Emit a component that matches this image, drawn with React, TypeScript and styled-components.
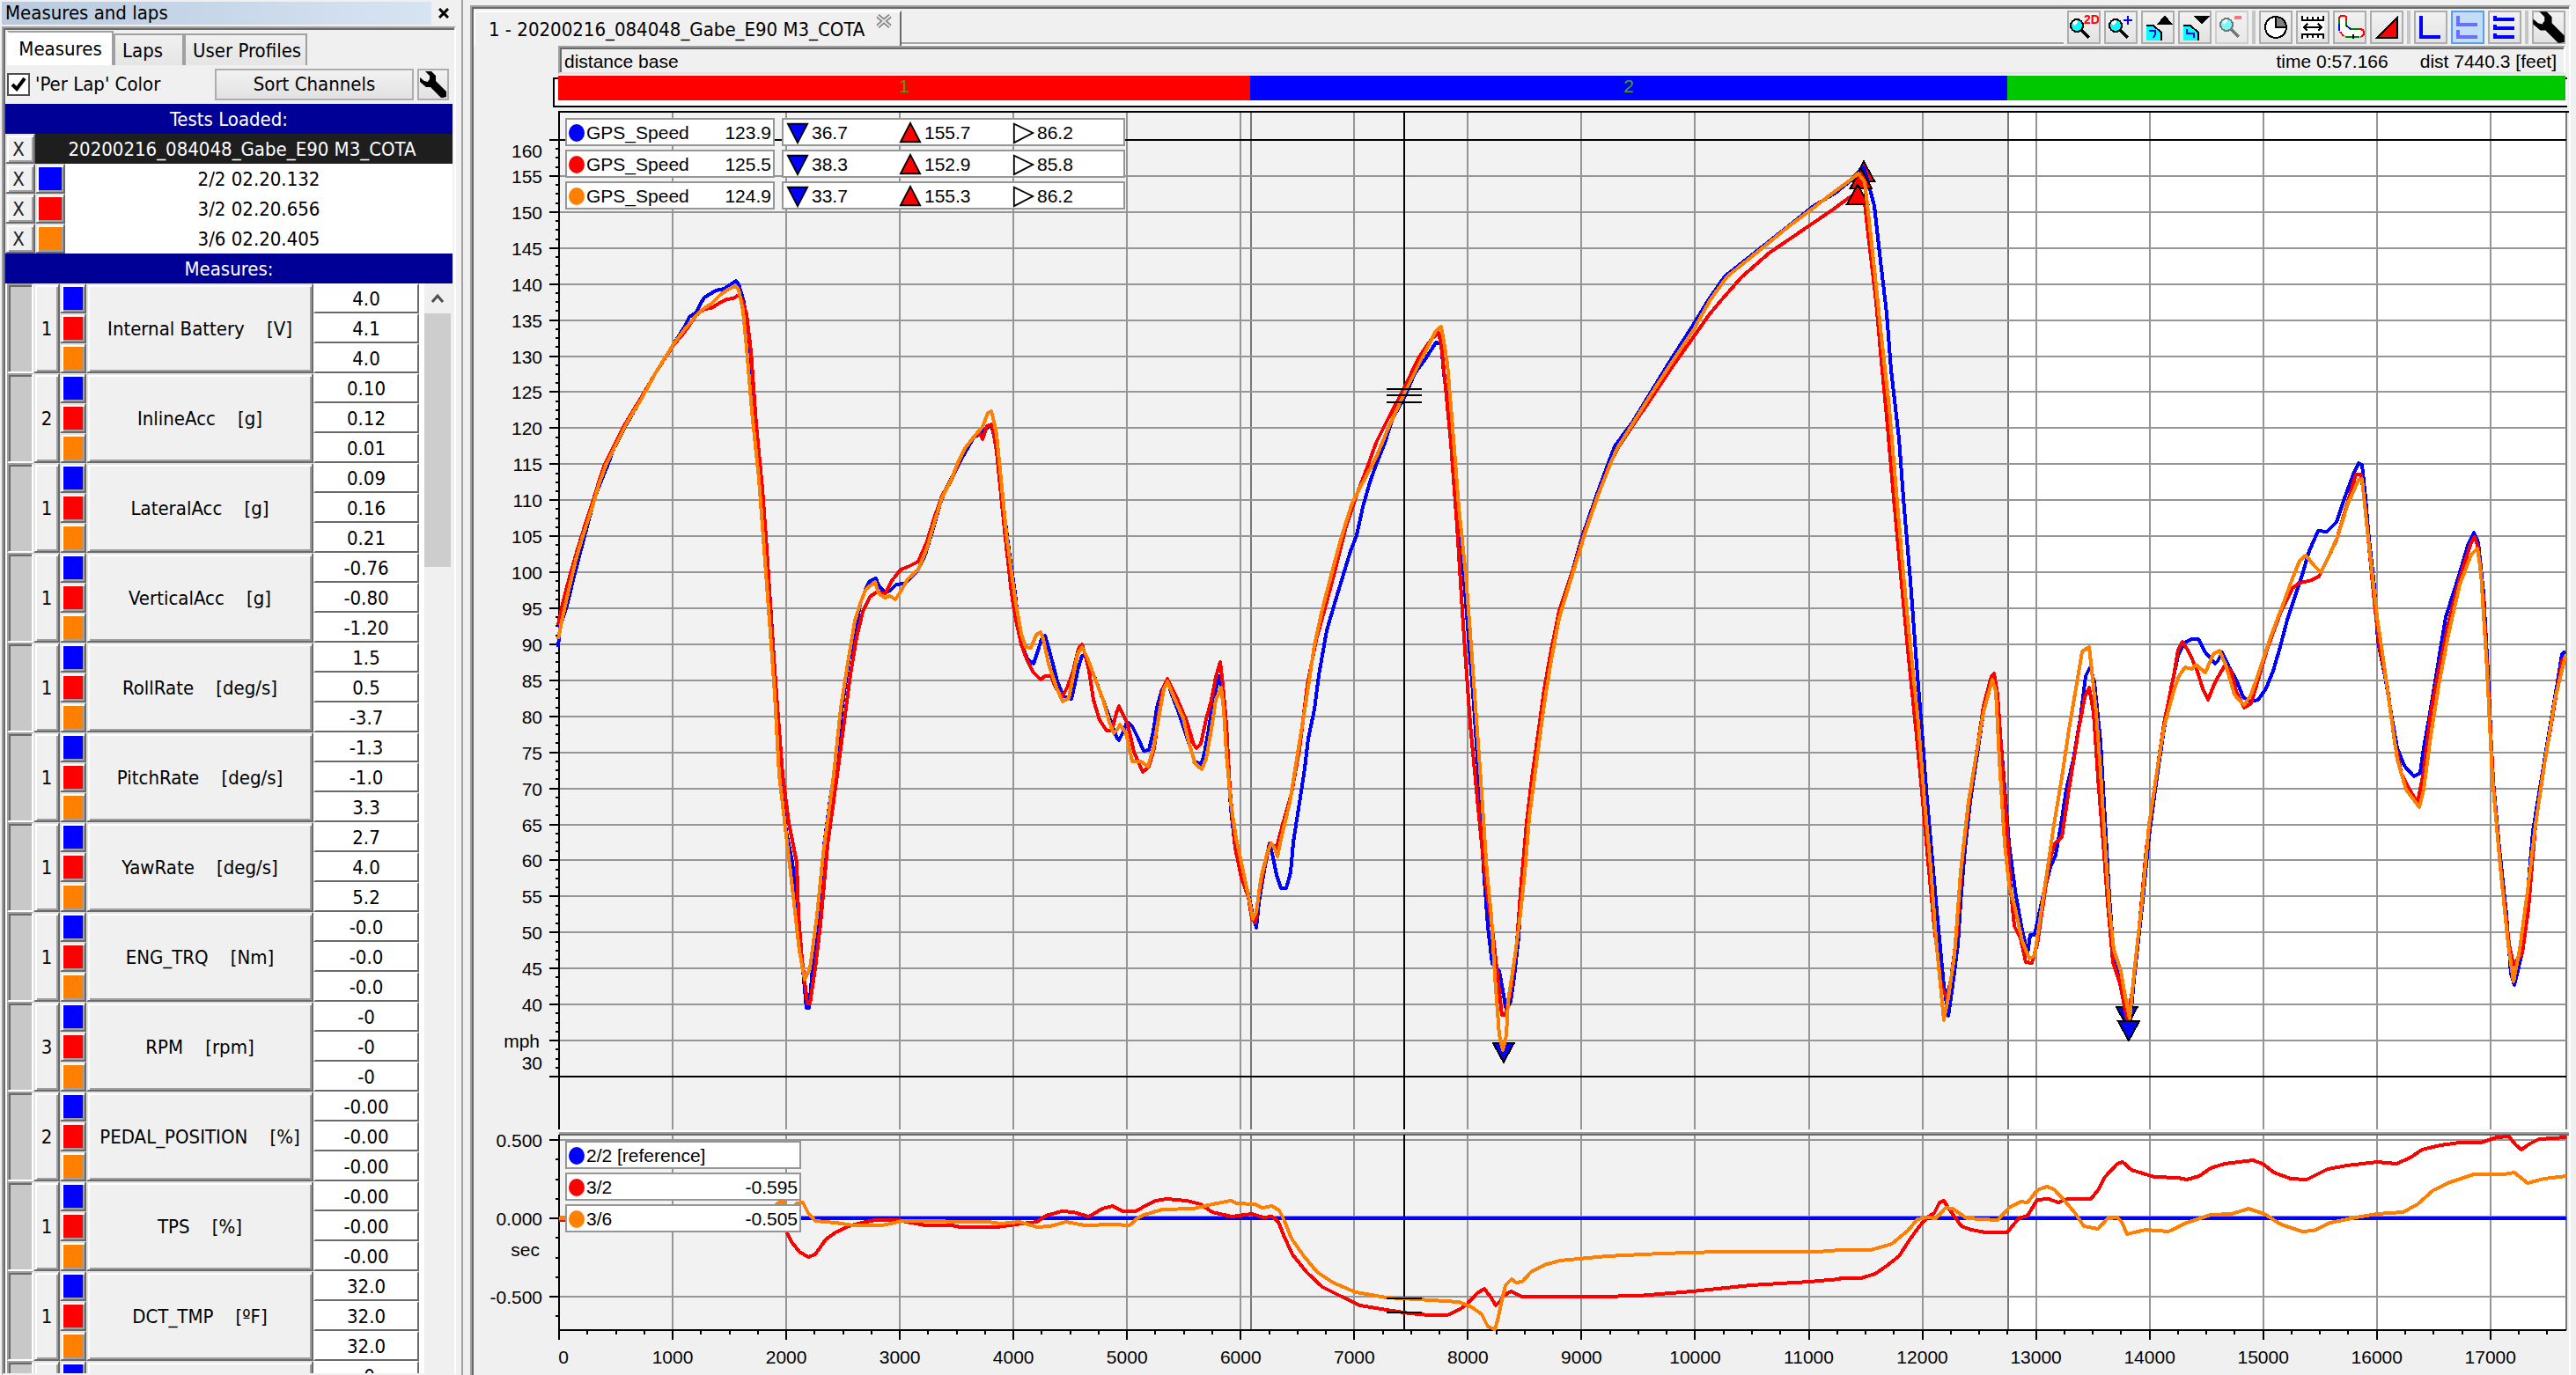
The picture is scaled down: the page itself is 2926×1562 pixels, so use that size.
import React, { useLayoutEffect, useRef, useState } from "react";
import styled, { createGlobalStyle, css } from "styled-components";

/* ---------- theme ---------- */

const BLUE = "#0000ff";
const RED = "#ff0000";
const ORANGE = "#ff8000";
const FACE = "#f0f0f0";
const LIGHT = "#e3e3e3";
const SHADOW = "#a0a0a0";
const DARK = "#696969";
const NAVY = "#000096";
const GRID = "#969696";
const UI_FONT = '"DejaVu Sans Condensed", "DejaVu Sans", sans-serif';
const PLOT_FONT = '"Liberation Sans", Arial, sans-serif';

const GlobalStyle = createGlobalStyle`
  * { box-sizing: border-box; }
  html, body { margin: 0; height: 100%; overflow: hidden; background: ${FACE}; }
  #root { height: 100%; }
  button, input { font: inherit; color: inherit; margin: 0; }
`;

const raised = css`
  border: 2px solid;
  border-color: ${LIGHT} ${DARK} ${DARK} ${LIGHT};
  box-shadow: inset 2px 2px #fff, inset -2px -2px ${SHADOW};
  background: ${FACE};
`;

/* ---------- telemetry ---------- */

type Block = { d0: number; dk: number; v0: number; vk: number; raw: string };
type Point = [number, number];

const decode = (blocks: Block[]): Point[] =>
  blocks.flatMap(({ d0, dk, v0, vk, raw }) =>
    raw.trim().split(/\s+/).map((pair): Point => {
      const [d, v] = pair.split(",").map(Number);
      return [d0 + d * dk, v0 + v * vk];
    })
  );

const sA = { d0: -271.2, dk: 3.7558, v0: 145.217, vk: -0.046751 };
const sB = { d0: 5463, dk: 3.7558, v0: 137.886, vk: -0.068568 };
const sC = { d0: 11042.2, dk: 4.2797, v0: 159.878, vk: -0.082594 };
const sW = { d0: -4920.6, dk: 7.7489, v0: 179.426, vk: -0.122175 };
const tA = { d0: -891.1, dk: 3.9535, v0: 1.5955, vk: -0.0018727 };
const tB = { d0: 5153, dk: 3.9535, v0: 0.69663, vk: -0.0018727 };
const tC = { d0: 11274.7, dk: 4.1314, v0: 0.69663, vk: -0.0018727 };

const speedBlue = decode([
  { ...sA, raw: "70,1190 75,1130 90,1065 105,990 122,910 140,820 155,750 172,695 185,650 200,600 230,530 265,455 300,375 340,290 365,240 378,208 395,195 403,172 412,152 440,130 460,125 475,112 487,102 494,112 505,165 513,240 521,350 535,540 548,720 560,900 572,1140 580,1300 592,1568" },
  { ...sW, raw: "893,945 900,980 906,1030 911,1090 916,1145 919,1145 923,1100 928,1060 936,960 944,900" },
  { ...sA, raw: "722,1568 735,1380 750,1230 768,1140 778,1060 790,1020 798,995 808,988 815,985 822,1005 835,1028 848,1022 862,1003 880,1000 895,985 915,960 930,915 945,855 968,755 985,705 1005,658 1020,622 1045,568 1060,555 1072,540 1086,530 1095,580 1105,690 1117,800 1128,920 1140,1030 1150,1120 1158,1180 1170,1225 1185,1240 1195,1200 1203,1165 1212,1155 1222,1200 1240,1290 1255,1335 1272,1343 1280,1310 1290,1250 1297,1215 1303,1215 1318,1250 1335,1305 1350,1355 1365,1410 1378,1455 1385,1465 1395,1440 1402,1410 1415,1425 1430,1460 1442,1497 1455,1495 1465,1440 1473,1370 1485,1315 1497,1288 1508,1330 1525,1385 1540,1440 1550,1480 1562,1530" },
  { ...sB, raw: "41,938 50,943 58,920 68,870 78,810 93,762 103,820 112,930 120,1030 130,1110 145,1165 160,1205 172,1245 179,1272 186,1220 200,1145 210,1102 218,1130 228,1165 238,1192 250,1192 260,1160 266,1100 280,1020 293,950 302,890 315,830 327,760 345,670 365,610 385,550 400,510 415,478 430,420 445,370 460,335 480,290 500,240 526,200 550,150 575,122 600,88 612,90 620,150 632,230 645,370 660,500 675,660 690,820 702,980 712,1150 722,1270 733,1345 748,1360 760,1410 766,1440 775,1420 785,1370 795,1290 805,1150 815,1070 825,985 840,900 855,800 870,720 890,640 920,550 945,475 975,400 1000,340 1020,298 1060,250 1100,195 1150,125 1200,55 1240,0" },
  { ...sW, raw: "1959,314 1997,284 2030,258" },
  { ...sC, raw: "0,110 45,88 75,68 95,50 103,45 115,75 125,110 135,190 150,290 160,385 175,500 185,600 200,740 212,880 222,990 232,1090 245,1210 255,1310 268,1420 277,1470 285,1430 297,1350 302,1280 312,1190 322,1110 335,1040 350,960 362,915 372,895 380,960 390,1050 402,1180 415,1260 428,1320 440,1365 445,1335 455,1335 463,1300 475,1260 487,1220 498,1200 508,1150 520,1090 535,1040 548,970 560,900 568,885 577,910 590,1010 600,1140 608,1270 618,1370 630,1400 642,1460 650,1490 660,1410 675,1290 690,1170 705,1080 720,990 735,920 750,865 762,843 778,838 792,838 805,860 825,878 832,875 840,860 855,885 870,905 883,935 900,942 915,940 930,920 945,890 960,850 975,805 990,765 1005,730 1020,690 1038,655 1055,657 1075,640 1092,600 1110,560 1120,542 1128,545 1135,600 1143,670 1153,750 1160,840 1175,900 1190,970 1200,1020 1215,1050 1235,1068 1248,1062 1255,1020 1265,970 1280,900 1300,800 1325,735 1345,680 1358,658 1367,675 1378,760 1388,920 1397,1060 1410,1190 1425,1300 1435,1400 1442,1418 1455,1370 1465,1300 1480,1160 1500,1060 1515,980 1530,910 1540,862 1547,858" },
]);

const speedRed = decode([
  { ...sA, raw: "70,1125 80,1060 97,980 115,900 132,830 150,760 165,700 180,645 198,598 230,522 265,450 300,375 340,292 365,255 395,205 412,186 430,184 445,170 465,158 480,155 493,143 502,160 511,200 521,310 535,530 548,720 560,900 572,1150 582,1330 597,1568" },
  { ...sW, raw: "896,935 905,980 907,1040 911,1090 917,1140 920,1140 926,1100 932,1050 940,960" },
  { ...sA, raw: "725,1568 742,1390 755,1270 770,1160 785,1085 800,1040 815,1028 838,1030 850,995 872,960 890,950 915,935 935,875 950,815 970,740 990,698 1008,640 1022,605 1048,560 1058,555 1065,572 1075,533 1088,527 1097,610 1107,740 1120,890 1132,1030 1143,1110 1155,1180 1170,1230 1185,1265 1200,1285 1212,1275 1225,1275 1235,1310 1252,1335 1265,1305 1278,1260 1290,1195 1297,1182 1305,1215 1315,1260 1325,1345 1340,1405 1355,1438 1367,1438 1378,1385 1385,1365 1393,1385 1405,1420 1420,1500 1440,1560 1455,1545 1466,1490 1478,1390 1488,1310 1498,1282 1508,1310 1525,1355 1545,1420 1560,1480" },
  { ...sB, raw: "12,845 25,890 40,908 50,900 62,850 75,810 84,765 95,735 101,780 110,860 118,990 130,1110 145,1170 160,1210 170,1255 177,1262 183,1215 200,1140 213,1102 228,1110 240,1070 262,1000 280,910 300,780 320,690 340,625 365,545 390,460 415,395 440,340 460,290 490,240 526,180 560,120 590,80 606,68 613,90 622,160 635,290 650,460 665,660 680,860 697,1010 710,1120 720,1200 735,1290 745,1370 755,1448 764,1448 775,1400 790,1300 800,1180 812,1060 825,970 840,880 855,790 870,710 890,630 925,540 950,470 980,395 1010,328 1030,298 1070,245 1110,195 1160,130 1200,80 1240,32 1270,0" },
  { ...sW, raw: "1978,315 2010,287" },
  { ...sC, raw: "0,137 40,115 75,95 95,90 103,92 115,170 128,270 140,370 152,480 165,600 180,730 195,870 212,1000 225,1110 235,1210 248,1320 262,1420 273,1440 282,1410 295,1330 305,1220 318,1120 335,1030 350,950 365,900 372,895 378,930 388,1040 398,1160 405,1260 412,1320 425,1340 437,1380 450,1382 460,1350 470,1290 485,1210 497,1180 510,1170 525,1090 545,990 558,935 567,918 575,960 585,1070 595,1180 605,1280 615,1380 630,1415 645,1475 655,1430 670,1320 685,1190 700,1090 720,980 740,900 750,855 758,842 772,858 788,888 800,920 812,940 825,910 845,882 858,890 870,925 885,952 900,945 915,905 935,850 960,795 985,752 1000,743 1020,740 1040,732 1055,705 1075,670 1095,615 1115,560 1127,560 1135,620 1145,700 1155,790 1165,850 1180,920 1195,1010 1210,1065 1225,1090 1243,1112 1255,1060 1270,960 1285,890 1305,810 1330,735 1352,675 1360,665 1368,685 1378,770 1388,940 1400,1100 1415,1230 1430,1350 1440,1385 1458,1365 1470,1290 1485,1150 1500,1065 1520,970 1540,875 1547,865" },
]);

const speedOrange = decode([
  { ...sA, raw: "70,1165 80,1100 95,1020 112,930 128,860 150,770 168,700 182,650 200,600 230,527 265,455 300,375 340,290 365,248 395,205 412,183 430,170 450,145 470,125 487,117 494,128 503,190 512,300 525,490 540,690 553,900 565,1110 578,1330 588,1568" },
  { ...sW, raw: "892,940 899,1000 908,1080 914,1113 920,1100 928,1040 935,970" },
  { ...sA, raw: "715,1568 732,1370 750,1220 765,1110 778,1060 790,1018 803,1005 813,995 822,1030 835,1042 848,1038 860,1048 872,1025 890,988 915,958 935,895 950,830 970,745 990,695 1008,635 1025,595 1048,558 1065,535 1076,495 1086,490 1092,520 1098,560 1107,690 1120,850 1133,970 1143,1060 1155,1150 1165,1190 1178,1192 1190,1152 1200,1145 1208,1165 1220,1240 1237,1310 1252,1352 1266,1340 1278,1275 1288,1210 1298,1188 1310,1220 1325,1270 1348,1345 1362,1410 1372,1445 1380,1435 1386,1418 1400,1445 1415,1530 1435,1530 1452,1545 1465,1490 1478,1400 1490,1315 1498,1290 1512,1335 1535,1400 1550,1480 1562,1530" },
  { ...sB, raw: "34,938 52,952 62,930 75,870 85,810 96,785 103,830 110,920 120,1020 132,1090 150,1165 163,1215 172,1255 180,1240 190,1175 205,1122 214,1102 222,1112 230,1128 240,1085 258,1020 275,930 295,820 315,700 335,628 360,545 380,480 405,412 430,370 460,320 490,260 526,190 570,115 600,65 612,55 620,85 628,130 640,260 655,420 670,560 683,700 695,850 708,1000 720,1160 730,1250 738,1370 748,1490 757,1520 765,1490 770,1420 785,1340 797,1260 808,1160 820,1050 835,940 855,820 870,730 890,645 925,545 950,475 980,398 1010,330 1025,302 1065,248 1105,190 1155,125 1205,60 1245,0" },
  { ...sW, raw: "1962,314 1999,284 2032,257" },
  { ...sC, raw: "0,112 40,88 75,66 93,55 105,70 113,120 127,230 140,330 155,450 170,590 185,730 200,850 215,980 228,1110 240,1220 252,1340 268,1478 278,1440 290,1370 302,1230 318,1110 335,1030 350,960 368,905 375,925 383,1040 393,1180 402,1250 415,1290 430,1345 443,1375 455,1370 468,1300 483,1210 495,1150 510,1070 525,990 540,920 552,858 567,850 573,890 582,960 590,1060 600,1180 608,1290 618,1360 632,1395 640,1430 650,1475 660,1400 675,1280 690,1150 705,1070 720,985 740,925 752,900 765,885 778,887 785,880 805,893 822,862 835,857 848,880 865,930 885,948 900,930 918,888 940,835 965,780 985,735 1000,705 1013,697 1030,715 1043,725 1055,705 1078,665 1100,610 1120,570 1128,568 1138,640 1148,720 1158,800 1170,860 1185,945 1200,1040 1218,1090 1245,1120 1255,1090 1270,1000 1285,915 1305,830 1330,745 1352,695 1365,685 1372,725 1385,890 1397,1070 1412,1220 1428,1350 1440,1412 1452,1360 1468,1260 1485,1150 1505,1040 1525,940 1547,865" },
]);

const deltaRed = decode([
  { ...tA, raw: "226,858 700,858 730,890 745,935 760,965 780,985 795,975 820,925 840,900 870,880 900,868 930,858 980,858 1010,868 1040,876 1100,877 1120,882 1200,882 1240,873 1290,865 1310,842 1345,828 1370,830 1405,847 1435,820 1458,810 1480,828 1510,828 1540,802" },
  { ...tB, raw: "0,330 25,312 50,305 95,312 125,325 150,350 195,366 240,358 265,370 285,366 297,385 310,430 330,495 360,555 395,605 440,640 480,668 540,685 590,695 635,702 675,702 700,685 718,665 740,628 757,612 770,640 782,668 792,655 800,635 815,622 840,640 1010,640 1100,635 1220,620 1350,600 1480,587 1548,578" },
  { ...tC, raw: "0,576 45,575 75,560 100,535 125,500 150,440 170,395 185,370 200,355 212,318 222,312 235,345 258,400 280,412 310,420 357,420 380,372 400,362 420,310 445,305 465,318 485,305 535,305 550,275 565,230 590,185 602,180 620,208 670,232 720,235 740,240 765,228 790,200 820,186 880,175 900,185 925,215 960,238 995,240 1040,205 1080,192 1145,180 1185,186 1215,165 1240,138 1280,122 1320,115 1365,113 1400,95 1425,93 1438,120 1452,138 1470,118 1490,102 1547,95" },
]);

const deltaOrange = decode([
  { ...tA, raw: "226,853 690,850 712,800 725,795 740,830 755,800 768,798 780,835 795,862 840,868 880,875 945,875 990,862 1180,864 1210,870 1250,865 1290,882 1320,880 1355,863 1395,875 1460,872 1495,875 1515,850" },
  { ...tB, raw: "0,360 40,342 110,340 150,325 192,312 205,322 245,324 262,335 285,330 300,345 312,380 328,440 355,500 385,555 420,590 470,625 540,642 640,650 700,658 730,675 750,700 765,740 780,750 787,720 795,650 803,600 818,580 828,590 840,587 860,555 890,530 925,516 1030,502 1150,492 1280,486 1500,486 1548,480" },
  { ...tC, raw: "0,480 65,480 110,458 145,415 165,375 185,368 205,372 225,335 240,340 270,372 335,378 360,335 385,315 400,318 420,275 440,265 455,272 480,315 500,355 520,400 550,408 570,372 590,368 600,385 612,425 650,412 700,418 740,388 790,360 835,358 870,340 905,358 940,392 985,418 1010,415 1045,388 1100,370 1145,358 1200,352 1230,325 1265,275 1300,248 1350,222 1415,222 1437,215 1465,252 1500,238 1547,228" },
]);

const DIST_MAX = 17668;
const SPLITS = [6091, 12755];
const CURSOR = 7440.3;
const GUTTER = 97;

const MEASURES: { n: string; name: string; unit: string; v: string[] }[] = [
  { n: "1", name: "Internal Battery", unit: "[V]", v: ["4.0", "4.1", "4.0"] },
  { n: "2", name: "InlineAcc", unit: "[g]", v: ["0.10", "0.12", "0.01"] },
  { n: "1", name: "LateralAcc", unit: "[g]", v: ["0.09", "0.16", "0.21"] },
  { n: "1", name: "VerticalAcc", unit: "[g]", v: ["-0.76", "-0.80", "-1.20"] },
  { n: "1", name: "RollRate", unit: "[deg/s]", v: ["1.5", "0.5", "-3.7"] },
  { n: "1", name: "PitchRate", unit: "[deg/s]", v: ["-1.3", "-1.0", "3.3"] },
  { n: "1", name: "YawRate", unit: "[deg/s]", v: ["2.7", "4.0", "5.2"] },
  { n: "1", name: "ENG_TRQ", unit: "[Nm]", v: ["-0.0", "-0.0", "-0.0"] },
  { n: "3", name: "RPM", unit: "[rpm]", v: ["-0", "-0", "-0"] },
  { n: "2", name: "PEDAL_POSITION", unit: "[%]", v: ["-0.00", "-0.00", "-0.00"] },
  { n: "1", name: "TPS", unit: "[%]", v: ["-0.00", "-0.00", "-0.00"] },
  { n: "1", name: "DCT_TMP", unit: "[ºF]", v: ["32.0", "32.0", "32.0"] },
  { n: "", name: "", unit: "", v: ["-0", "", ""] },
];
const LAP_COLORS = [BLUE, RED, ORANGE];

/* ---------- shell ---------- */

const Shell = styled.div`
  display: flex;
  height: 100vh;
  overflow: hidden;
  background: ${FACE};
  font: 22px/26px ${UI_FONT};
  color: #000;
`;

const Sidebar = styled.aside`
  flex: none;
  width: 526px;
  display: flex;
  flex-direction: column;
  padding: 2px 6px 0 2px;
  border-right: 2px solid ${SHADOW};
`;

const TitleBar = styled.header`
  flex: none;
  display: flex;
  align-items: center;
  height: 28px;
  padding-bottom: 2px;
`;
const Title = styled.h1`
  flex: 1;
  margin: 0;
  padding-left: 4px;
  font: inherit;
  background: linear-gradient(90deg, #b9cade, #d7e4f2);
`;
const CloseButton = styled.button`
  width: 28px;
  height: 26px;
  padding: 7px 8px;
  border: 0;
  background: none;
  svg { display: block; width: 12px; height: 12px; }
`;

const SidePanel = styled.div`
  flex: 1;
  min-height: 0;
  display: flex;
  flex-direction: column;
  border: 2px solid;
  border-color: ${SHADOW} #fff transparent ${SHADOW};
  box-shadow: inset 2px 2px ${DARK};
  padding: 2px 2px 0 2px;
`;

const TabRow = styled.nav`
  flex: none;
  display: flex;
  align-items: flex-end;
  height: 40px;
  padding-left: 2px;
`;
const SideTab = styled.button<{ $on?: boolean; $w: number }>`
  width: ${(p) => p.$w}px;
  height: ${(p) => (p.$on ? 39 : 36)}px;
  padding: ${(p) => (p.$on ? 0 : 2)}px 8px 0;
  border: 2px solid ${SHADOW};
  border-bottom: 0;
  ${(p) => p.$on && "border-left-color: #fff;"}
  background: ${(p) => (p.$on ? "#fff" : "linear-gradient(#f0f0f0, #e5e5e5)")};
  text-align: ${(p) => (p.$on ? "center" : "left")};
  white-space: nowrap;
`;

const OptionsRow = styled.div`
  flex: none;
  display: flex;
  align-items: center;
  gap: 4px;
  height: 44px;
  padding: 0 4px 0 2px;
`;
const CheckLabel = styled.label`
  flex: 1;
  display: flex;
  align-items: center;
  gap: 6px;
  white-space: nowrap;
`;
const Check = styled.input`
  appearance: none;
  width: 26px;
  height: 26px;
  border: 2px solid #505050;
  background: #fff;
  &:checked {
    background: #fff url("data:image/svg+xml,%3Csvg xmlns='http://www.w3.org/2000/svg' viewBox='0 0 22 22'%3E%3Cpath d='M4 11l5 5L18 4' fill='none' stroke='%23000' stroke-width='4'/%3E%3C/svg%3E");
  }
`;
const GrayButton = styled.button<{ $w: number }>`
  width: ${(p) => p.$w}px;
  height: 36px;
  padding: 0;
  border: 2px solid #adadad;
  background: linear-gradient(#f2f2f2, #e2e2e2);
  svg { display: block; width: 32px; height: 32px; }
`;

const SectionHead = styled.h2`
  flex: none;
  margin: 0;
  height: 34px;
  font: inherit;
  line-height: 36px;
  text-align: center;
  color: #fff;
  background: ${NAVY};
`;

const TestRow = styled.div<{ $dark?: boolean }>`
  flex: none;
  display: flex;
  height: 34px;
  color: ${(p) => (p.$dark ? "#fff" : "#000")};
  background: ${(p) => (p.$dark ? "#1e1e1e" : "#fff")};
`;
const RemoveButton = styled.button`
  ${raised}
  width: 34px;
  padding: 2px 4px 0 0;
  color: #222;
`;
const LapSwatch = styled.button<{ $c: string }>`
  ${raised}
  width: 34px;
  padding: 2px;
  background: ${(p) => p.$c};
`;
const TestName = styled.span<{ $inset?: boolean }>`
  flex: 1;
  padding-right: ${(p) => (p.$inset ? 4 : 0)}px;
  line-height: 36px;
  text-align: center;
  white-space: nowrap;
`;

const ListArea = styled.div`
  flex: 1;
  min-height: 0;
  display: flex;
  overflow: hidden;
  background: #fff;
`;
const MeasureTable = styled.table`
  flex: none;
  align-self: flex-start;
  width: 470px;
  table-layout: fixed;
  border-collapse: separate;
  border-spacing: 0;
  border-left: 2px solid #fff;
  margin-right: 6px;
  td { padding: 2px 0 0; height: 34px; line-height: 26px; text-align: center; white-space: pre; overflow: hidden; }
`;
const Lane = styled.td`
  border: 2px solid;
  border-color: ${SHADOW} #fff #fff ${SHADOW};
  box-shadow: inset 2px 2px ${DARK};
  background: #c8c8c8;
`;
const Raised = styled.td`${raised}`;
const ColorCell = styled.td<{ $c: string }>`
  ${raised}
  background: ${(p) => p.$c};
`;
const ValueCell = styled.td`
  border: 2px solid;
  border-color: #fff ${DARK} ${DARK} #fff;
  background: #fff;
`;
const ScrollBar = styled.div`
  flex: 1;
  background: ${FACE};
`;
const ScrollArrow = styled.button`
  display: flex;
  align-items: center;
  justify-content: center;
  width: 30px;
  height: 34px;
  padding: 0;
  border: 0;
  background: none;
`;
const ScrollThumb = styled.div`
  width: 30px;
  height: 288px;
  background: #cdcdcd;
`;

/* ---------- chart frame ---------- */

const Main = styled.main`
  flex: 1;
  min-width: 0;
  display: flex;
  flex-direction: column;
  margin: 6px 6px 0 8px;
  border: 2px solid;
  border-color: ${SHADOW} #fff transparent ${SHADOW};
  border-bottom: 0;
  box-shadow: inset 2px 2px ${DARK};
  padding: 2px 0 0 2px;
`;
const Strip = styled.div`
  flex: none;
  display: flex;
  height: 42px;
  padding-top: 2px;
`;
const DocTab = styled.div`
  display: flex;
  width: 486px;
  padding: 0 6px 0 15px;
  border: 2px solid;
  border-color: #fff ${DARK} transparent #fff;
  border-bottom: 0;
  white-space: nowrap;
`;
const DocName = styled.span`
  flex: 1;
  line-height: 40px;
`;
const DocClose = styled.button`
  width: 24px;
  height: 20px;
  padding: 2px;
  border: 0;
  background: none;
  svg { display: block; width: 20px; height: 16px; }
`;
const StripLine = styled.div`
  flex: 1;
  border-bottom: 2px solid #fff;
  box-shadow: inset 0 -2px ${SHADOW};
`;
const Toolbar = styled.div`
  display: flex;
  gap: 4px;
  padding: 0 4px;
`;
const Tool = styled.button<{ $on?: boolean }>`
  width: 38px;
  height: 38px;
  padding: 0;
  border: 2px solid ${(p) => (p.$on ? "#5b9de6" : "#adadad")};
  background: ${(p) => (p.$on ? "#c3ddf8" : "linear-gradient(#f2f2f2, #e2e2e2)")};
  svg { display: block; margin: -2px; width: 38px; height: 38px; }
  &:disabled { opacity: 0.5; }
`;
const Divider = styled.i`
  width: 4px;
  height: 38px;
  background: #c6c6c6;
`;

const StatusBar = styled.div`
  flex: none;
  display: flex;
  gap: 36px;
  height: 32px;
  margin: 0 4px 0 96px;
  padding: 0 8px 0 5px;
  border: 2px solid;
  border-color: ${SHADOW} #fff ${LIGHT} ${SHADOW};
  box-shadow: inset 2px 2px ${DARK};
  font: 21px/32px ${PLOT_FONT};
`;
const Grow = styled.span`flex: 1;`;

const LapFrame = styled.div`
  flex: none;
  height: 34px;
  margin: 4px 2px 2px 90px;
  border: 2px solid #000;
  border-right: 0;
  background: #fff;
`;
const LapBar = styled.div`
  display: flex;
  height: 28px;
  margin: -4px 2px 0 4px;
`;
const LapPart = styled.div<{ $c: string; $span: number }>`
  flex: ${(p) => p.$span} 0 0;
  background: ${(p) => p.$c};
  color: #46a800;
  font: 21px/24px ${PLOT_FONT};
  text-align: center;
`;

const PlotBox = styled.section<{ $fixed?: boolean }>`
  position: relative;
  min-height: 0;
  ${(p) => (p.$fixed ? "flex: none; height: 278px;" : "flex: 1;")}
  > svg { position: absolute; inset: 0; display: block; width: 100%; height: 100%; }
  text { font: 21px ${PLOT_FONT}; }
`;
const Legend = styled.div<{ $top: number }>`
  position: absolute;
  left: 104px;
  top: ${(p) => p.$top}px;
  display: flex;
  flex-direction: column;
  gap: 4px;
  font: 21px/26px ${PLOT_FONT};
`;
const LegendRow = styled.div`
  display: flex;
  gap: 8px;
`;
const LegendBox = styled.div<{ $w: number }>`
  display: flex;
  align-items: center;
  gap: 2px;
  width: ${(p) => p.$w}px;
  height: 32px;
  padding: 2px 2px 0;
  border: 2px solid ${GRID};
  background: #fff;
`;
const Dot = styled.i<{ $c: string }>`
  width: 18px;
  height: 20px;
  border-radius: 50%;
  background: ${(p) => p.$c};
`;
const Stat = styled.span`
  width: 128px;
  display: flex;
  align-items: center;
  gap: 2px;
  svg { width: 28px; height: 26px; }
`;

/* ---------- icons ---------- */

const Wrench = () => (
  <svg viewBox="0 0 32 32" aria-hidden="true">
    <path d="M7 1h7l5 5v6l12 12v6l-4 1h-2L13 19H8L1 13V8l5 4h4l2-2V6z" fill="#000" />
    <path d="M6 2l-1 2 6 5-1 4-4-1-4-4" fill="#eee" />
  </svg>
);
const Lens = ({ x, y }: { x: number; y: number }) => (
  <g>
    <circle cx={x} cy={y} r="7" fill="#00ffff" stroke="#000" strokeWidth="2" />
    <path d={`M${x - 4} ${y - 1}l4-4`} stroke="#fff" strokeWidth="4" />
    <path d={`M${x + 5} ${y + 5}l9 9`} stroke="#000" strokeWidth="4" />
  </g>
);
const Cone = () => (
  <g>
    <path d="M6 18h9l8 7v9H6z" fill="#00ffff" />
    <path d="M6 17h8l9 8v9" fill="none" stroke="#000" strokeWidth="2" />
  </g>
);
const Ell = ({ y, h, c = BLUE }: { y: number; h: number; c?: string }) => (
  <path d={`M8 ${y}v${h}h22`} fill="none" stroke={c} strokeWidth="4" />
);
const ICONS: Record<string, React.ReactNode> = {
  "Zoom 2D": (<><Lens x={11} y={17} /><text x="19" y="15" fontSize="14" fontWeight="bold" fontFamily="Liberation Sans" fill={RED}>2D</text></>),
  "Zoom in": (<><Lens x={13} y={17} /><path d="M22 11h10M27 6v10" stroke={BLUE} strokeWidth="2" /></>),
  "Expand up": (<><path d="M18 16L27 5l9 11z" /><Cone /><path d="M9 23h7v4l-2 4" fill="none" stroke={BLUE} strokeWidth="2" /></>),
  "Expand down": (<><path d="M18 6h18L27 16z" /><Cone /><path d="M10 21v5h8v5" fill="none" stroke={BLUE} strokeWidth="2" /></>),
  "Zoom out": (<><Lens x={13} y={16} /><path d="M22 8h8" stroke={RED} strokeWidth="4" /></>),
  "Time base": (<><circle cx="19" cy="19" r="12" fill="#fff" stroke="#000" strokeWidth="2" /><path d="M19 8v11h11A11 11 0 0 0 19 8z" fill="#808080" /><path d="M19 7v12h12" fill="none" stroke="#000" strokeWidth="2" /></>),
  "Distance base": (<><path d="M6 6h26v26H6z" fill="#fff" /><path d="M7 6v5h24V6M13 7v4M19 7v4M25 7v4M7 32v-5h24v5M13 31v-4M19 31v-4M25 31v-4M9 19h20M13 15l-4 4 4 4M25 15l4 4-4 4" fill="none" stroke="#000" strokeWidth="2" /></>),
  Track: (
    <g fill="none">
      <path d="M11 10v8q1 8 10 8h11" stroke="#fff" strokeWidth="8" />
      <path d="M7 10V8q0-2 4-2t4 2v5M8 24l4 5M30 21q5 0 5 4t-4 5" stroke={RED} strokeWidth="2" />
      <path d="M15 12v6M7 9v7M20 21h10M14 30h16" stroke="#008000" strokeWidth="2" />
      <path d="M15 17l5 4M7 15v8" stroke={BLUE} strokeWidth="2" />
      <path d="M23 27v5" stroke="#000" strokeWidth="2" />
    </g>
  ),
  Slope: <path d="M8 31L31 8v23z" fill={RED} stroke="#000" strokeWidth="2" />,
  "One row": <Ell y={6} h={24} />,
  "Two rows": (<><Ell y={6} h={10} c="#6a70fa" /><Ell y={22} h={8} c="#6a70fa" /></>),
  "Three rows": (<><Ell y={6} h={4} /><Ell y={16} h={4} /><Ell y={26} h={4} /></>),
};
const TOOL_GROUPS = [
  ["Zoom 2D", "Zoom in", "Expand up", "Expand down", "Zoom out"],
  ["Time base", "Distance base", "Track", "Slope"],
  ["One row", "Two rows", "Three rows"],
];

const UpMark = ({ x, y }: { x: number; y: number }) => (
  <path d={`M${x - 12} ${y + 22}L${x} ${y}l12 22z`} fill={RED} stroke="#000" strokeWidth="2" />
);
const DownMark = ({ x, y }: { x: number; y: number }) => (
  <path d={`M${x - 12} ${y - 22}h24L${x} ${y}z`} fill={BLUE} stroke="#000" strokeWidth="2" />
);

/* ---------- plots ---------- */

function useSize() {
  const ref = useRef<HTMLElement>(null);
  const [size, setSize] = useState({ w: 0, h: 0 });
  useLayoutEffect(() => {
    const el = ref.current;
    if (!el) return;
    const read = () => setSize({ w: el.clientWidth, h: el.clientHeight });
    read();
    const ro = new ResizeObserver(read);
    ro.observe(el);
    return () => ro.disconnect();
  }, []);
  return { ref, ...size };
}

const range = (from: number, to: number, step: number) =>
  Array.from({ length: Math.floor((to - from) / step + 0.001) + 1 }, (_, i) => from + i * step);

const Trace = ({ pts, c, X, Y }: { pts: Point[]; c: string; X: (n: number) => number; Y: (n: number) => number }) => (
  <polyline
    points={pts.map(([d, v]) => `${Math.round(X(d))},${Math.round(Y(v))}`).join(" ")}
    fill="none" stroke={c} strokeWidth="4" strokeLinejoin="round"
  />
);

const Backdrop = ({ X, top, bottom }: { X: (n: number) => number; top: number; bottom: number }) => (
  <g>
    <rect x={X(0)} y={top} width={X(SPLITS[1]) - X(0)} height={bottom - top} fill="#f2f2f2" />
    <rect x={X(SPLITS[1])} y={top} width={X(DIST_MAX) - X(SPLITS[1])} height={bottom - top} fill="#fff" />
    {range(1000, 17000, 1000).map((d) => (
      <path key={d} d={`M${X(d)} ${top}V${bottom}`} stroke={GRID} strokeWidth="2" />
    ))}
    {SPLITS.concat(DIST_MAX).map((d) => (
      <path key={d} d={`M${X(d)} ${top}V${bottom}`} stroke="#787878" strokeWidth="2" />
    ))}
  </g>
);

function SpeedPlot() {
  const { ref, w, h } = useSize();
  const X = (d: number) => GUTTER + (d * (w - GUTTER - 3)) / DIST_MAX;
  const Y = (v: number) => 35 + ((160 - v) * (h - 96)) / 130;
  const bottom = h - 1;
  const cx = X(CURSOR);
  const label = (v: number) => (v === 160 ? 12 : v === 30 ? -16 : 0);
  return (
    <PlotBox ref={ref}>
      {w > 0 && (
        <svg role="img" aria-label="GPS_Speed by distance">
          <g shapeRendering="crispEdges">
            <Backdrop X={X} top={3} bottom={bottom} />
            {range(30, 160, 5).map((v) => (
              <path key={v} d={`M${X(0)} ${Y(v)}H${X(DIST_MAX)}`} stroke={v === 30 || v === 160 ? "#000" : GRID} strokeWidth="2" />
            ))}
            {range(30, 160, 1.25).map((v) => (
              <path key={v} d={`M${X(0) - (v % 5 ? 4 : 11)} ${Y(v)}H${X(0)}`} stroke="#000" strokeWidth="2" />
            ))}
            <path d={`M${X(0)} ${bottom}V3H${w}`} fill="none" stroke="#000" strokeWidth="2" />
            <path d={`M${cx} 3V${bottom}`} stroke="#000" strokeWidth="2" />
          </g>
          {range(30, 160, 5).map((v) => (
            <text key={v} x={X(0) - (v === 35 ? 22 : 19)} y={Y(v) + label(v) + 8} textAnchor="end">{v === 35 ? "mph" : v}</text>
          ))}
          <g shapeRendering="crispEdges">
            <UpMark x={X(11484)} y={Y(157)} />
            <DownMark x={X(13816)} y={Y(35)} />
            <Trace pts={speedBlue} c={BLUE} X={X} Y={Y} />
            <DownMark x={X(13800)} y={Y(37)} />
            <DownMark x={X(13816)} y={Y(35)} />
            <Trace pts={speedRed} c={RED} X={X} Y={Y} />
            <UpMark x={X(11460)} y={Y(156)} />
            <UpMark x={X(11430)} y={Y(153.8)} />
            <DownMark x={X(8314)} y={Y(32)} />
            <Trace pts={speedOrange} c={ORANGE} X={X} Y={Y} />
            {[125.4, 124.6, 123.6].map((v) => (
              <path key={v} d={`M${cx - 20} ${Y(v)}h40`} stroke="#000" strokeWidth="2" />
            ))}
          </g>
        </svg>
      )}
      <Legend $top={10}>
        {[
          [BLUE, "123.9", "36.7", "155.7", "86.2"],
          [RED, "125.5", "38.3", "152.9", "85.8"],
          [ORANGE, "124.9", "33.7", "155.3", "86.2"],
        ].map(([c, now, min, max, avg]) => (
          <LegendRow key={c}>
            <LegendBox $w={238}><Dot $c={c} /><Grow>GPS_Speed</Grow><span>{now}</span></LegendBox>
            <LegendBox $w={390}>
              <Stat><svg viewBox="0 0 28 28"><path d="M2 3h24L14 26z" fill={BLUE} stroke="#000" strokeWidth="2" /></svg>{min}</Stat>
              <Stat><svg viewBox="0 0 28 28"><path d="M2 25h24L14 2z" fill={RED} stroke="#000" strokeWidth="2" /></svg>{max}</Stat>
              <Stat><svg viewBox="0 0 28 28"><path d="M3 3v23l23-12z" fill="#fff" stroke="#000" strokeWidth="2" /></svg>{avg}</Stat>
            </LegendBox>
          </LegendRow>
        ))}
      </Legend>
    </PlotBox>
  );
}

function DeltaPlot() {
  const { ref, w, h } = useSize();
  const X = (d: number) => GUTTER + (d * (w - GUTTER - 3)) / DIST_MAX;
  const bottom = h - 51;
  const Y = (v: number) => 100 - v * 178;
  const cx = X(CURSOR);
  return (
    <PlotBox ref={ref} $fixed>
      {w > 0 && (
        <svg role="img" aria-label="Time difference by distance">
          <g shapeRendering="crispEdges">
            <Backdrop X={X} top={5} bottom={bottom} />
            <path d={`M${X(0)} 1H${w}`} stroke="#fff" strokeWidth="2" />
            <path d={`M${X(0)} 3H${w}`} stroke={SHADOW} strokeWidth="2" />
            <path d={`M${X(0)} 5H${w}`} stroke={DARK} strokeWidth="2" />
            {[0.5, 0.01, -0.5].map((v) => (
              <path key={v} d={`M${X(0)} ${Y(v)}H${X(DIST_MAX)}`} stroke={GRID} strokeWidth="2" />
            ))}
            {range(-0.625, 0.5, 0.125).map((v) => (
              <path key={v} d={`M${X(0) - (v % 0.5 ? 4 : 11)} ${Y(v)}H${X(0)}`} stroke="#000" strokeWidth="2" />
            ))}
            <path d={`M${X(0)} 5V${bottom}H${X(DIST_MAX)}`} fill="none" stroke="#000" strokeWidth="2" />
            {range(0, 17500, 250).map((d) => (
              <path key={d} d={`M${X(d)} ${bottom}v${d % 1000 ? 5 : 11}`} stroke="#000" strokeWidth="2" />
            ))}
            <path d={`M${cx} 5V${bottom}`} stroke="#000" strokeWidth="2" />
            <path d={`M${X(0)} ${Y(0)}H${X(DIST_MAX)}`} stroke={BLUE} strokeWidth="4" />
            <Trace pts={deltaRed} c={RED} X={X} Y={Y} />
            <Trace pts={deltaOrange} c={ORANGE} X={X} Y={Y} />
            {[-0.509, -0.6].map((v) => (
              <path key={v} d={`M${cx - 20} ${Y(v)}h40`} stroke="#000" strokeWidth="2" />
            ))}
          </g>
          {[0.5, 0, -0.5].map((v) => (
            <text key={v} x={X(0) - 19} y={Y(v) + 8} textAnchor="end">{v.toFixed(3)}</text>
          ))}
          <text x={X(0) - 22} y={Y(-0.24)} textAnchor="end">sec</text>
          {range(0, 17000, 1000).map((d) => (
            <text key={d} x={X(d) + (d ? 0 : 5)} y={h - 13} textAnchor="middle">{d}</text>
          ))}
        </svg>
      )}
      <Legend $top={12}>
        {[
          [BLUE, "2/2 [reference]", ""],
          [RED, "3/2", "-0.595"],
          [ORANGE, "3/6", "-0.505"],
        ].map(([c, name, v]) => (
          <LegendBox key={c} $w={268}><Dot $c={c} /><Grow>{name}</Grow><span>{v}</span></LegendBox>
        ))}
      </Legend>
    </PlotBox>
  );
}

/* ---------- page ---------- */

const TESTS = [
  { c: BLUE, t: "2/2 02.20.132" },
  { c: RED, t: "3/2 02.20.656" },
  { c: ORANGE, t: "3/6 02.20.405" },
];

function MeasuresPanel() {
  return (
    <Sidebar>
      <TitleBar>
        <Title>Measures and laps</Title>
        <CloseButton aria-label="Close panel">
          <svg viewBox="0 0 12 12"><path d="M1 1l10 10M11 1L1 11" stroke="#000" strokeWidth="3" /></svg>
        </CloseButton>
      </TitleBar>
      <SidePanel>
        <TabRow>
          <SideTab $on $w={121}>Measures</SideTab>
          <SideTab $w={80}>Laps</SideTab>
          <SideTab $w={140}>User Profiles</SideTab>
        </TabRow>
        <OptionsRow>
          <CheckLabel><Check type="checkbox" defaultChecked />'Per Lap' Color</CheckLabel>
          <GrayButton $w={226}>Sort Channels</GrayButton>
          <GrayButton $w={36} aria-label="Settings"><Wrench /></GrayButton>
        </OptionsRow>
        <SectionHead>Tests Loaded:</SectionHead>
        <TestRow $dark>
          <RemoveButton>X</RemoveButton>
          <TestName $inset>20200216_084048_Gabe_E90 M3_COTA</TestName>
        </TestRow>
        {TESTS.map((t) => (
          <TestRow key={t.t}>
            <RemoveButton>X</RemoveButton>
            <LapSwatch $c={t.c} aria-label={`Color of ${t.t}`} />
            <TestName>{t.t}</TestName>
          </TestRow>
        ))}
        <SectionHead>Measures:</SectionHead>
        <ListArea>
          <MeasureTable>
            <colgroup>
              <col width="30" /><col width="30" /><col width="30" /><col width="258" /><col width="120" />
            </colgroup>
            <tbody>
              {MEASURES.map((m, r) =>
                m.v.map((v, i) => (
                  <tr key={`${r}-${i}`}>
                    {i === 0 && (<><Lane rowSpan={3} /><Raised rowSpan={3}>{m.n}</Raised></>)}
                    <ColorCell $c={LAP_COLORS[i]} />
                    {i === 0 && <Raised rowSpan={3}>{m.name}{"    "}{m.unit}</Raised>}
                    <ValueCell>{v}</ValueCell>
                  </tr>
                ))
              )}
            </tbody>
          </MeasureTable>
          <ScrollBar>
            <ScrollArrow aria-label="Scroll up">
              <svg width="14" height="12" viewBox="0 0 14 12"><path d="M1 10l6-7 6 7" fill="none" stroke="#505050" strokeWidth="3" /></svg>
            </ScrollArrow>
            <ScrollThumb />
          </ScrollBar>
        </ListArea>
      </SidePanel>
    </Sidebar>
  );
}

export default function App() {
  return (
    <Shell>
      <GlobalStyle />
      <MeasuresPanel />
      <Main>
        <Strip>
          <DocTab>
            <DocName>1 - 20200216_084048_Gabe_E90 M3_COTA</DocName>
            <DocClose aria-label="Close document">
              <svg viewBox="0 0 20 16"><path d="M3 2l14 12M17 2L3 14" stroke="#808080" strokeWidth="5" /><path d="M3 2l14 12M17 2L3 14" stroke="#e8e8e8" strokeWidth="2" /></svg>
            </DocClose>
          </DocTab>
          <StripLine />
          <Toolbar>
            {TOOL_GROUPS.map((group, g) => (
              <React.Fragment key={g}>
                {group.map((name) => (
                  <Tool key={name} aria-label={name} $on={name === "Two rows"} disabled={name === "Zoom out"}>
                    <svg viewBox="0 0 38 38" shapeRendering="crispEdges">{ICONS[name]}</svg>
                  </Tool>
                ))}
                <Divider />
              </React.Fragment>
            ))}
            <Tool aria-label="Chart settings"><Wrench /></Tool>
          </Toolbar>
        </Strip>
        <StatusBar>
          <Grow>distance base</Grow>
          <span>time 0:57.166</span>
          <span>dist 7440.3 [feet]</span>
        </StatusBar>
        <LapFrame>
          <LapBar>
            <LapPart $c="#ff0000" $span={SPLITS[0]}>1</LapPart>
            <LapPart $c="#0000ff" $span={SPLITS[1] - SPLITS[0]}>2</LapPart>
            <LapPart $c="#00c800" $span={DIST_MAX - SPLITS[1]} />
          </LapBar>
        </LapFrame>
        <SpeedPlot />
        <DeltaPlot />
      </Main>
    </Shell>
  );
}
